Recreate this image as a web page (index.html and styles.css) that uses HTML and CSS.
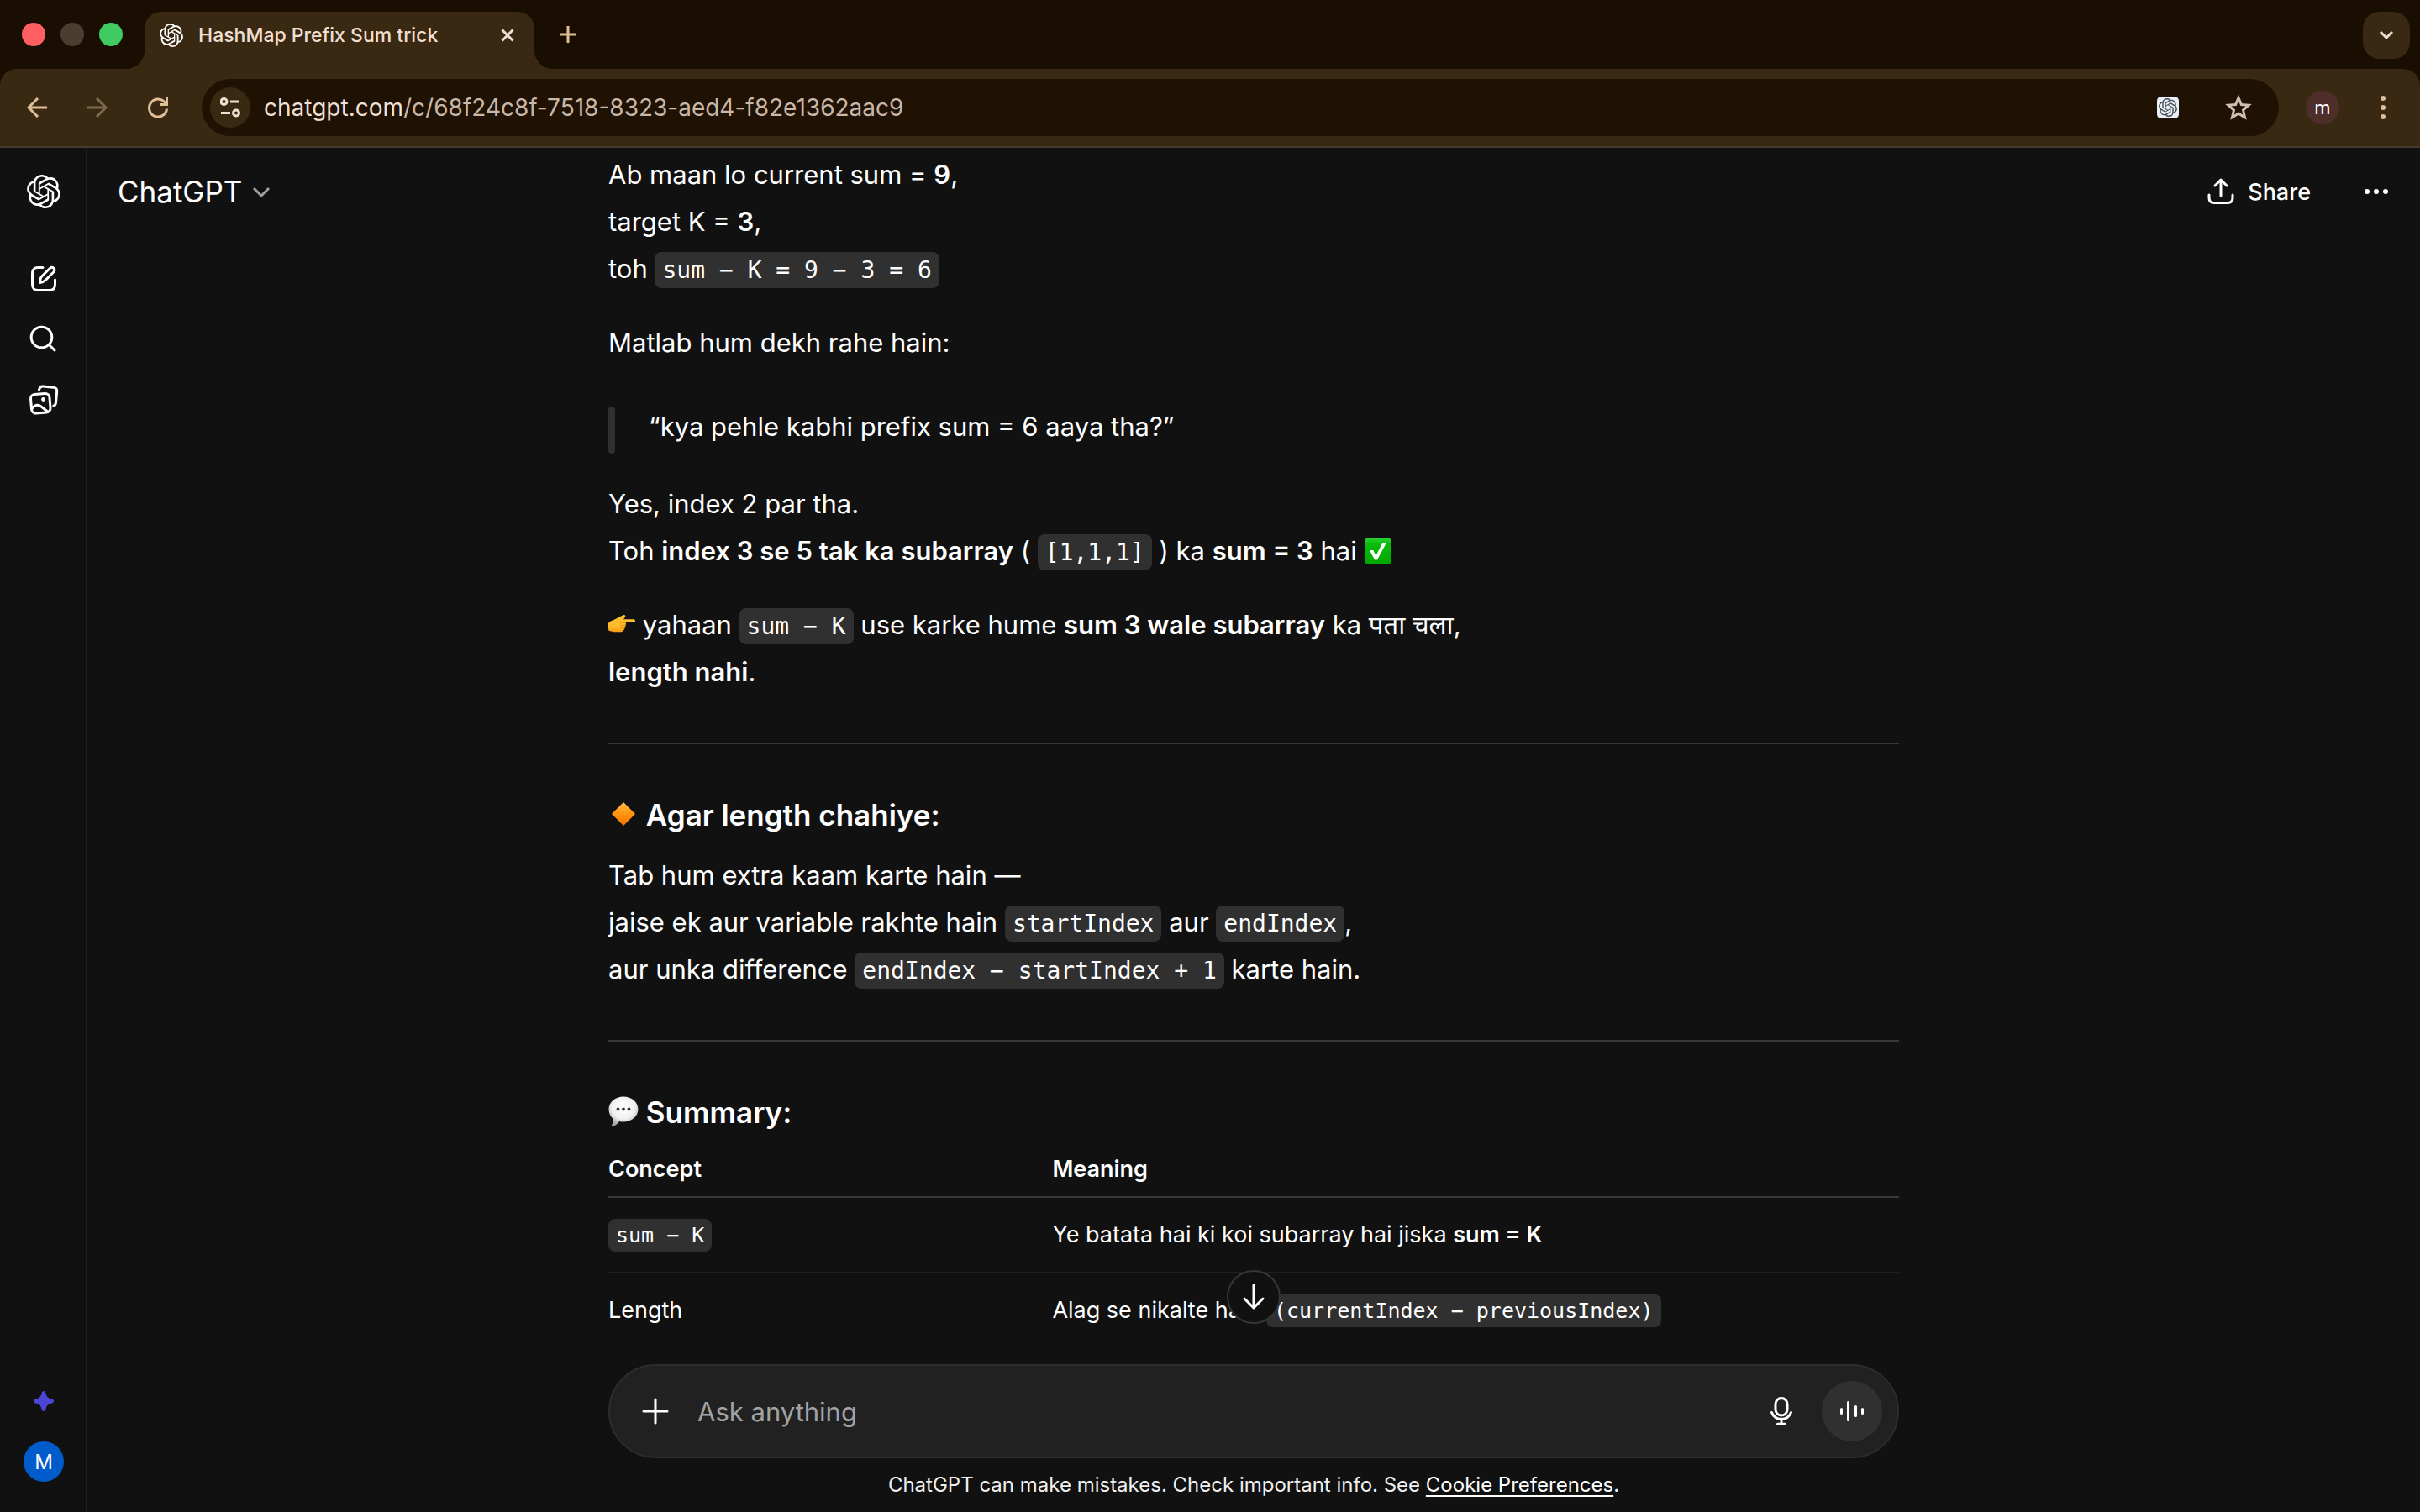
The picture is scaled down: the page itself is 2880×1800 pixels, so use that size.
FILE: index.html
```html
<!DOCTYPE html>
<html lang="en">
<head>
<meta charset="utf-8">
<title>HashMap Prefix Sum trick</title>
<link rel="stylesheet" href="styles.css">
</head>
<body>
<svg class="defs" aria-hidden="true">
  <defs>
    <symbol id="logo" viewBox="0 0 24 24"><path d="M22.2819 9.8211a5.9847 5.9847 0 0 0-.5157-4.9108 6.0462 6.0462 0 0 0-6.5098-2.9A6.0651 6.0651 0 0 0 4.9807 4.1818a5.9847 5.9847 0 0 0-3.9977 2.9 6.0462 6.0462 0 0 0 .7427 7.0966 5.98 5.98 0 0 0 .511 4.9107 6.051 6.051 0 0 0 6.5146 2.9001A5.9847 5.9847 0 0 0 13.2599 24a6.0557 6.0557 0 0 0 5.7718-4.2058 5.9894 5.9894 0 0 0 3.9977-2.9001 6.0557 6.0557 0 0 0-.7475-7.0729zm-9.022 12.6081a4.4755 4.4755 0 0 1-2.8764-1.0408l.1419-.0804 4.7783-2.7582a.7948.7948 0 0 0 .3927-.6813v-6.7369l2.02 1.1686a.071.071 0 0 1 .038.052v5.5826a4.504 4.504 0 0 1-4.4945 4.4944zm-9.6607-4.1254a4.4708 4.4708 0 0 1-.5346-3.0137l.142.0852 4.783 2.7582a.7712.7712 0 0 0 .7806 0l5.8428-3.3685v2.3324a.0804.0804 0 0 1-.0332.0615L9.74 19.9502a4.4992 4.4992 0 0 1-6.1408-1.6464zM2.3408 7.8956a4.485 4.485 0 0 1 2.3655-1.9728V11.6a.7664.7664 0 0 0 .3879.6765l5.8144 3.3543-2.0201 1.1685a.0757.0757 0 0 1-.071 0l-4.8303-2.7865A4.504 4.504 0 0 1 2.3408 7.872zm16.5963 3.8558L13.1038 8.364 15.1192 7.2a.0757.0757 0 0 1 .071 0l4.8303 2.7913a4.4944 4.4944 0 0 1-.6765 8.1042v-5.6772a.79.79 0 0 0-.407-.667zm2.0107-3.0231l-.142-.0852-4.7735-2.7818a.7759.7759 0 0 0-.7854 0L9.409 9.2297V6.8974a.0662.0662 0 0 1 .0284-.0615l4.8303-2.7866a4.4992 4.4992 0 0 1 6.6802 4.66zM8.3065 12.863l-2.02-1.1638a.0804.0804 0 0 1-.038-.0567V6.0742a4.4992 4.4992 0 0 1 7.3757-3.4537l-.142.0805L8.704 5.459a.7948.7948 0 0 0-.3927.6813zm1.0976-2.3654l2.602-1.4998 2.6069 1.4998v2.9994l-2.5974 1.4997-2.6067-1.4997Z"/></symbol>
    <linearGradient id="check-fill" x1="0" y1="0" x2="0" y2="1"><stop offset="0" stop-color="#2fd43a"/><stop offset=".25" stop-color="#08bb0c"/><stop offset="1" stop-color="#00a800"/></linearGradient>
    <linearGradient id="hand-fill" x1="0" y1="0" x2="0" y2="1"><stop offset="0" stop-color="#ffc12e"/><stop offset=".7" stop-color="#ffb92a"/><stop offset="1" stop-color="#f79a10"/></linearGradient>
    <linearGradient id="diamond-fill" x1="0" y1="0" x2="0" y2="1"><stop offset="0" stop-color="#ffb84a"/><stop offset=".45" stop-color="#ff9a10"/><stop offset="1" stop-color="#f57000"/></linearGradient>
    <radialGradient id="bubble-fill" cx=".5" cy=".35" r=".62"><stop offset="0" stop-color="#ffffff"/><stop offset=".65" stop-color="#f0f0f0"/><stop offset="1" stop-color="#a8a8a8"/></radialGradient>
  </defs>
</svg>

<div class="browser">
  <header class="tabstrip">
    <div class="lights">
      <span class="light light-close"></span>
      <span class="light light-min"></span>
      <span class="light light-max"></span>
    </div>
    <div class="tab">
      <svg class="favicon" aria-hidden="true"><use href="#logo"/></svg>
      <span class="tab-title">HashMap Prefix Sum trick</span>
      <button class="chrome-btn" aria-label="Close tab"><svg class="i16" viewBox="0 0 16 16"><path d="M1.500 1.500l13 13M14.500 1.500l-13 13"/></svg></button>
    </div>
    <button class="chrome-btn newtab" aria-label="New tab"><svg class="i20" viewBox="0 0 20 20"><path d="M10 0v20M0 10h20"/></svg></button>
    <button class="chrome-btn tabsearch" aria-label="Search tabs"><svg class="i20" viewBox="0 0 20 20"><path d="M3 6l7 7 7-7"/></svg></button>
  </header>

  <nav class="toolbar">
    <button class="chrome-btn" aria-label="Back"><svg class="i24" viewBox="0 0 24 24"><path d="M24 12H2M13 1L2 12l11 11"/></svg></button>
    <button class="chrome-btn is-off" aria-label="Forward" disabled><svg class="i24" viewBox="0 0 24 24"><path d="M0 12h22M11 1l11 11-11 11"/></svg></button>
    <button class="chrome-btn" aria-label="Reload"><svg class="i24" viewBox="0 0 24 24"><path d="M21.500 8A10.500 10.500 0 1 0 22.500 13.500M22.500 0v8.500H14"/></svg></button>
    <div class="omnibox">
      <button class="site-info" aria-label="Site information"><svg class="i24" viewBox="0 0 24 24"><circle cx="4.500" cy="5" r="3.500"/><path d="M12 5h11M1 18.500h11"/><circle cx="19" cy="18.500" r="3.500"/></svg></button>
      <p class="url">chatgpt.com<span class="url-path">/c/68f24c8f-7518-8323-aed4-f82e1362aac9</span></p>
      <button class="ext" aria-label="ChatGPT extension"><svg class="ext-logo" aria-hidden="true"><use href="#logo"/></svg></button>
      <button class="chrome-btn star" aria-label="Bookmark"><svg class="i32" viewBox="0 0 32 32"><path d="M16 4.500l3.400 8.100 8.700.700-6.600 5.800 2 8.600-7.500-4.600-7.500 4.600 2-8.600-6.600-5.800 8.700-.700z"/></svg></button>
    </div>
    <button class="profile" aria-label="Profile">m</button>
    <button class="chrome-btn menu" aria-label="Menu"><svg class="i32 solid" viewBox="0 0 32 32"><circle cx="16" cy="5" r="3"/><circle cx="16" cy="16" r="3"/><circle cx="16" cy="27" r="3"/></svg></button>
  </nav>

  <div class="app">
    <aside class="rail">
      <a class="rail-link rail-home" href="#" aria-label="ChatGPT"><svg class="i40 solid" aria-hidden="true"><use href="#logo"/></svg></a>
      <a class="rail-link" href="#" aria-label="New chat"><svg class="i40" viewBox="0 0 40 40"><path d="M19 6.500h-5.500c-5 0-7 2-7 7v13c0 5 2 7 7 7h13c5 0 7-2 7-7V21"/><path d="M15.500 24.500c.200-4 .800-6 2.500-7.700L27.500 7.300c1.300-1.200 3.200-1.100 4.400 0 1.100 1.200 1.200 3.100 0 4.400L22.400 21.200c-1.800 1.800-3 2.700-6.900 3.300z"/></svg></a>
      <a class="rail-link" href="#" aria-label="Search chats"><svg class="i40" viewBox="0 0 40 40"><circle cx="17.500" cy="17.500" r="12.300"/><path d="M26.500 26.500L33 33"/></svg></a>
      <a class="rail-link" href="#" aria-label="Library"><svg class="i40" viewBox="0 0 40 40"><g transform="rotate(-5 16 24)"><rect x="5" y="13" width="22.500" height="22.500" rx="5"/><path d="M5.500 29.500c4-4.500 8-4.500 11-1.500l7.500 7"/></g><circle class="dot" cx="19.500" cy="19.500" r="2.400"/><path d="M14.500 8c.600-3 2.200-4.200 5-3.900l12 1.200c3 .400 4.500 2 4.200 5L34.500 23c-.200 2.200-.900 3.500-2.700 4.200"/></svg></a>
      <button class="rail-link rail-spark" aria-label="Upgrade"><svg class="i24 solid" viewBox="0 0 24 24"><path d="M12 0c1.400 0 2 .900 2.400 2.400 1.100 4.400 2.800 6.100 7.200 7.200 1.500.400 2.400 1 2.400 2.400s-.900 2-2.400 2.400c-4.400 1.100-6.100 2.800-7.200 7.200C14 23.100 13.400 24 12 24s-2-.900-2.400-2.400c-1.100-4.400-2.800-6.100-7.200-7.200C.9 14 0 13.400 0 12s.900-2 2.400-2.400c4.400-1.100 6.100-2.800 7.200-7.200C10 .9 10.600 0 12 0z"/></svg></button>
      <button class="account" aria-label="Account">M</button>
    </aside>

    <div class="chat">
      <div class="chatbar">
        <button class="model">ChatGPT <svg class="i24" viewBox="0 0 24 24"><path d="M3 8l9 9 9-9"/></svg></button>
        <div class="chatbar-actions">
          <button class="share"><svg class="i32" viewBox="0 0 32 32"><path d="M2 20v3.500c0 4 2 6 6 6h16c4 0 6-2 6-6V20M16 21V2M9 9l7-7 7 7"/></svg>Share</button>
          <button class="more" aria-label="More options"><svg class="i32 solid" viewBox="0 0 32 32"><circle cx="5" cy="16" r="3"/><circle cx="16" cy="16" r="3"/><circle cx="27" cy="16" r="3"/></svg></button>
        </div>
      </div>

      <main class="thread">
        <article class="message">
          <p>Ab maan lo current sum = <strong>9</strong>,<br>target K = <strong>3</strong>,<br>toh <code>sum − K = 9 − 3 = 6</code></p>
          <p>Matlab hum dekh rahe hain:</p>
          <blockquote>“kya pehle kabhi prefix sum = 6 aaya tha?”</blockquote>
          <p>Yes, index 2 par tha.<br>Toh <strong>index 3 se 5 tak ka subarray</strong> ( <code>[1,1,1]</code> ) ka <strong>sum = 3</strong> hai <svg class="emoji" viewBox="0 0 32 32" role="img" aria-label="check mark"><rect x="0" y="0" width="32" height="32" rx="5" fill="url(#check-fill)"/><path d="M6 15h4.200l3.300 6.500L21.500 6H26L15 26.500h-3z" fill="#fff"/></svg></p>
          <p><svg class="emoji" viewBox="0 0 32 32" role="img" aria-label="pointing right"><path d="M0 14c.500-1.500 2-2.200 4-3 4-1.600 7-3.200 10.500-5.200l3.500-1.600c1.500-.600 2.800.800 2 2.200L18 9.300h12c1.300 0 2 .800 2 1.900s-.700 1.900-2 1.900h-9.500c.700 1 .600 2.400-.200 3.200.5 1.200.1 2.500-.9 3.200.2 1.400-.5 2.500-1.800 2.900-.5 1.300-1.600 1.900-3.100 1.900H8.500c-3 0-5.500-.800-8-1.600-.7-2.500-.9-6-.5-8.700z" fill="url(#hand-fill)"/><path d="M14 13.200h6.500M14.500 16.500h5.600M14 19.700h5" stroke="#e8950f" stroke-width="1" fill="none"/></svg> yahaan <code>sum − K</code> use karke hume <strong>sum 3 wale subarray</strong> ka <span lang="hi">पता चला</span>,<br><strong>length nahi</strong>.</p>
          <hr>
          <h3><svg class="emoji-lg" viewBox="0 0 36 36" role="img" aria-label="orange diamond"><path d="M18 4L32 18 18 32 4 18z" fill="url(#diamond-fill)"/></svg> Agar length chahiye:</h3>
          <p>Tab hum extra kaam karte hain —<br>jaise ek aur variable rakhte hain <code>startIndex</code> aur <code>endIndex</code>,<br>aur unka difference <code>endIndex − startIndex + 1</code> karte hain.</p>
          <hr>
          <h3><svg class="emoji-lg" viewBox="0 0 36 36" role="img" aria-label="speech bubble"><path d="M18 0.500C27.500.500 35.500 7 35.500 15.500S27.500 30.500 18 30.500c-1.800 0-3.500-.200-5-.600C11 33 7.500 35.500 4.500 36c-1 0-1.200-.700-.500-1.500 1.200-1.800 1.800-4 1.500-7.500C2.500 24.200.5 20.200.5 15.500.5 7 8.500.5 18 .5z" fill="url(#bubble-fill)"/><g fill="#333"><circle cx="11.500" cy="15.500" r="1.900"/><circle cx="18" cy="15.500" r="1.900"/><circle cx="24.500" cy="15.500" r="1.900"/></g></svg> Summary:</h3>
          <table class="summary">
            <thead><tr><th scope="col">Concept</th><th scope="col">Meaning</th></tr></thead>
            <tbody>
              <tr><td><code>sum − K</code></td><td>Ye batata hai ki koi subarray hai jiska <strong>sum = K</strong></td></tr>
              <tr><td>Length</td><td>Alag se nikalte hain <code>(currentIndex − previousIndex)</code></td></tr>
            </tbody>
          </table>
        </article>
      </main>

      <div class="dock">
        <button class="to-bottom" aria-label="Scroll to bottom"><svg class="i32" viewBox="0 0 32 32"><path d="M16 2v27M5 18l11 11 11-11"/></svg></button>
        <form class="composer">
          <button class="tool" type="button" aria-label="Add files"><svg class="i32" viewBox="0 0 32 32"><path d="M16 2v28M2 16h28"/></svg></button>
          <input class="prompt" type="text" placeholder="Ask anything" aria-label="Ask anything">
          <button class="tool mic" type="button" aria-label="Dictate"><svg class="i40" viewBox="0 0 40 40"><rect x="13" y="4.500" width="14" height="20.500" rx="7"/><path d="M8.500 21.500c2 5 6.500 8 11.500 8s9.500-3 11.500-8M20 30v5M15.500 35.300h9"/></svg></button>
          <button class="voice" type="button" aria-label="Voice mode"><svg class="i32" viewBox="0 0 32 32"><path d="M3.500 13.500v5M11.500 5.500v21M20.500 10.500v11M28.500 13.500v5"/></svg></button>
        </form>
        <p class="note">ChatGPT can make mistakes. Check important info. See <a href="#">Cookie Preferences</a>.</p>
      </div>
    </div>
  </div>
</div>
</body>
</html>
```
FILE: styles.css
```css
:root {
  --strip: #1a0e02;
  --toolbar: #392912;
  --field: #201203;
  --tan: #dfbf98;
  --cream: #f0dfd2;
  --page: #111111;
  --chip: #303030;
  --line: #383838;
  --sans: Inter, "Liberation Sans", "Noto Sans", sans-serif;
}

* { box-sizing: border-box; }

body {
  margin: 0;
  background: var(--page);
  color: #fff;
  font-family: var(--sans);
}

button, input { font: inherit; color: inherit; }

button {
  display: flex;
  align-items: center;
  justify-content: center;
  padding: 0;
  border: 0;
  background: none;
}

p { margin: 0; }

.defs { position: absolute; width: 0; height: 0; }

svg {
  flex: none;
  fill: none;
  stroke: currentColor;
  stroke-width: 3;
}

.solid, .favicon, .ext-logo { fill: currentColor; stroke: none; }
.i16 { width: 16px; height: 16px; }
.i20 { width: 20px; height: 20px; }
.i24 { width: 24px; height: 24px; }
.i32 { width: 32px; height: 32px; }
.i40 { width: 40px; height: 40px; }

.browser {
  display: flex;
  flex-direction: column;
  height: 100vh;
  overflow: hidden;
  background: var(--strip);
}

/* Tab strip */
.tabstrip {
  display: flex;
  align-items: center;
  height: 82px;
  padding: 14px 12px 0 26px;
}

.lights {
  display: flex;
  gap: 18px;
  padding-bottom: 14px;
}

.light { width: 28px; height: 28px; border-radius: 50%; }
.light-close { background: #ff5f60; }
.light-min { background: #4a3e31; }
.light-max { background: #3fcb62; }

.tab {
  position: relative;
  display: flex;
  align-items: center;
  width: 464px;
  height: 68px;
  margin-left: 26px;
  padding: 0 24px 12px 18px;
  border-radius: 20px 20px 0 0;
  background: var(--toolbar);
  color: var(--cream);
}

.tab::before, .tab::after {
  content: "";
  position: absolute;
  bottom: 0;
  width: 22px;
  height: 22px;
}

.tab::before { right: 100%; background: radial-gradient(circle at 0 0, transparent 22px, var(--toolbar) 22px); }
.tab::after { left: 100%; background: radial-gradient(circle at 100% 0, transparent 22px, var(--toolbar) 22px); }

.favicon { width: 28px; height: 28px; color: #fff; }

.tab-title {
  flex: 1;
  margin-left: 18px;
  font-size: 23px;
  font-weight: 500;
}

.chrome-btn { color: var(--tan); }
.tab .chrome-btn { color: var(--cream); }
.newtab { margin: 0 auto 14px 30px; }

.tabsearch {
  width: 56px;
  height: 56px;
  margin-bottom: 12px;
  border-radius: 20px;
  background: var(--toolbar);
  color: var(--cream);
}

/* Toolbar */
.toolbar {
  display: flex;
  align-items: center;
  gap: 48px;
  height: 94px;
  padding: 0 28px 0 32px;
  border-bottom: 2px solid #463a2e;
  border-radius: 20px 20px 0 0;
  background: var(--toolbar);
}

.is-off { color: #7d6a50; }

.omnibox {
  display: flex;
  flex: 1;
  align-items: center;
  height: 68px;
  margin: 0 -16px 0 -8px;
  padding: 0 32px 0 10px;
  border-radius: 34px;
  background: var(--field);
}

.site-info {
  width: 48px;
  height: 48px;
  border-radius: 50%;
  background: var(--toolbar);
  color: var(--cream);
}

.url {
  flex: 1;
  margin-left: 16px;
  color: var(--cream);
  font-size: 28px;
}
.url-path { color: #c9b8a9; }

.ext {
  width: 26px;
  height: 26px;
  border-radius: 5px;
  background: #e9f0f8;
  color: #4a4e55;
}
.ext-logo { width: 22px; height: 22px; }
.star { margin-left: 55px; color: #cfbdaf; }

.profile {
  width: 40px;
  height: 40px;
  border-radius: 50%;
  background: #4d2e28;
  font-size: 22px;
}
.menu { margin-left: -12px; }

/* App */
.app {
  display: flex;
  flex: 1;
  min-height: 0;
  background: var(--page);
}

.rail {
  display: flex;
  flex-direction: column;
  align-items: center;
  width: 104px;
  padding: 16px 0 36px 2px;
  border-right: 2px solid #1f1f1f;
}

.rail-link {
  display: flex;
  align-items: center;
  justify-content: center;
  width: 72px;
  height: 72px;
  color: #fff;
}
.rail-home { margin-bottom: 32px; }
.rail-spark { margin-top: auto; color: #4b47d6; }

.account {
  width: 48px;
  height: 48px;
  margin-top: 12px;
  border-radius: 50%;
  background: #005bcb;
  font-size: 24px;
}

.rail circle.dot { fill: #fff; stroke: none; }
.rail path, .composer path, .share path, .to-bottom path { stroke-linecap: round; stroke-linejoin: round; }

.chat {
  position: relative;
  display: flex;
  flex: 1;
  flex-direction: column;
  min-width: 0;
}

.chatbar {
  position: absolute;
  inset: 0 0 auto;
  display: flex;
  align-items: center;
  justify-content: space-between;
  height: 104px;
  padding: 0 36px;
}

.model { gap: 11px; font-size: 35px; }
.model svg { color: #a0a0a0; }
.chatbar-actions { display: flex; align-items: center; gap: 62px; }
.share { gap: 16px; font-size: 27px; font-weight: 500; }

.thread {
  flex: 1;
  min-height: 0;
  overflow: hidden;
  padding-top: 4px;
}

.message, .composer {
  width: 1536px;
  max-width: 100%;
  margin: 0 auto;
}

.message { font-size: 31px; line-height: 56px; }
.message p + p { margin-top: 32px; }
.message strong { font-weight: 600; }

.message code {
  padding: 5px 9px;
  border-radius: 8px;
  background: var(--chip);
  font-family: "DejaVu Sans Mono", monospace;
  font-size: 28px;
  line-height: 1;
}

.message blockquote {
  position: relative;
  margin: 44px 0 36px;
  padding-left: 48px;
}
.message blockquote::before {
  content: "";
  position: absolute;
  inset: 4px auto -4px 0;
  width: 8px;
  border-radius: 4px;
  background: var(--chip);
}

.message hr {
  height: 2px;
  margin: 56px 0;
  border: 0;
  background: var(--line);
}

.message h3 {
  margin: 0 0 16px;
  font-size: 35px;
  font-weight: 600;
}

.emoji { width: 32px; height: 32px; vertical-align: -5px; stroke: none; }
.emoji-lg { width: 36px; height: 36px; vertical-align: -4px; stroke: none; }

.summary {
  width: 100%;
  border-spacing: 0;
  font-size: 27px;
  line-height: 48px;
}
.summary th, .summary td { width: 65.600%; padding: 0; text-align: left; }
.summary th:first-child, .summary td:first-child { width: 34.400%; }
.summary th { padding-bottom: 8px; border-bottom: 2px solid var(--line); font-weight: 600; }
.summary td { padding: 20px 0; }
.summary tr:not(:last-child) td { border-bottom: 2px solid #1f1f1f; }
.summary code { font-size: 25px; }

/* Composer */
.dock { position: relative; }

.to-bottom {
  position: absolute;
  bottom: calc(100% + 48px);
  left: calc(50% - 32px);
  width: 64px;
  height: 64px;
  border: 2px solid #363636;
  border-radius: 50%;
  background: var(--page);
}

.composer {
  display: flex;
  align-items: center;
  height: 112px;
  padding: 0 18px;
  border: 2px solid #2d2d2d;
  border-radius: 56px;
  background: #212121;
}

.tool { width: 72px; height: 72px; }

.prompt {
  flex: 1;
  min-width: 0;
  margin-left: 14px;
  padding: 0;
  border: 0;
  outline: 0;
  background: none;
  font-size: 31px;
}
.prompt::placeholder { color: #a3a3a3; opacity: 1; }

.voice {
  width: 72px;
  height: 72px;
  margin-left: 12px;
  border-radius: 50%;
  background: var(--chip);
}

.note {
  color: #f0f0f0;
  font-size: 24px;
  line-height: 64px;
  text-align: center;
}
.note a { color: #fff; text-underline-offset: 4px; }
```
